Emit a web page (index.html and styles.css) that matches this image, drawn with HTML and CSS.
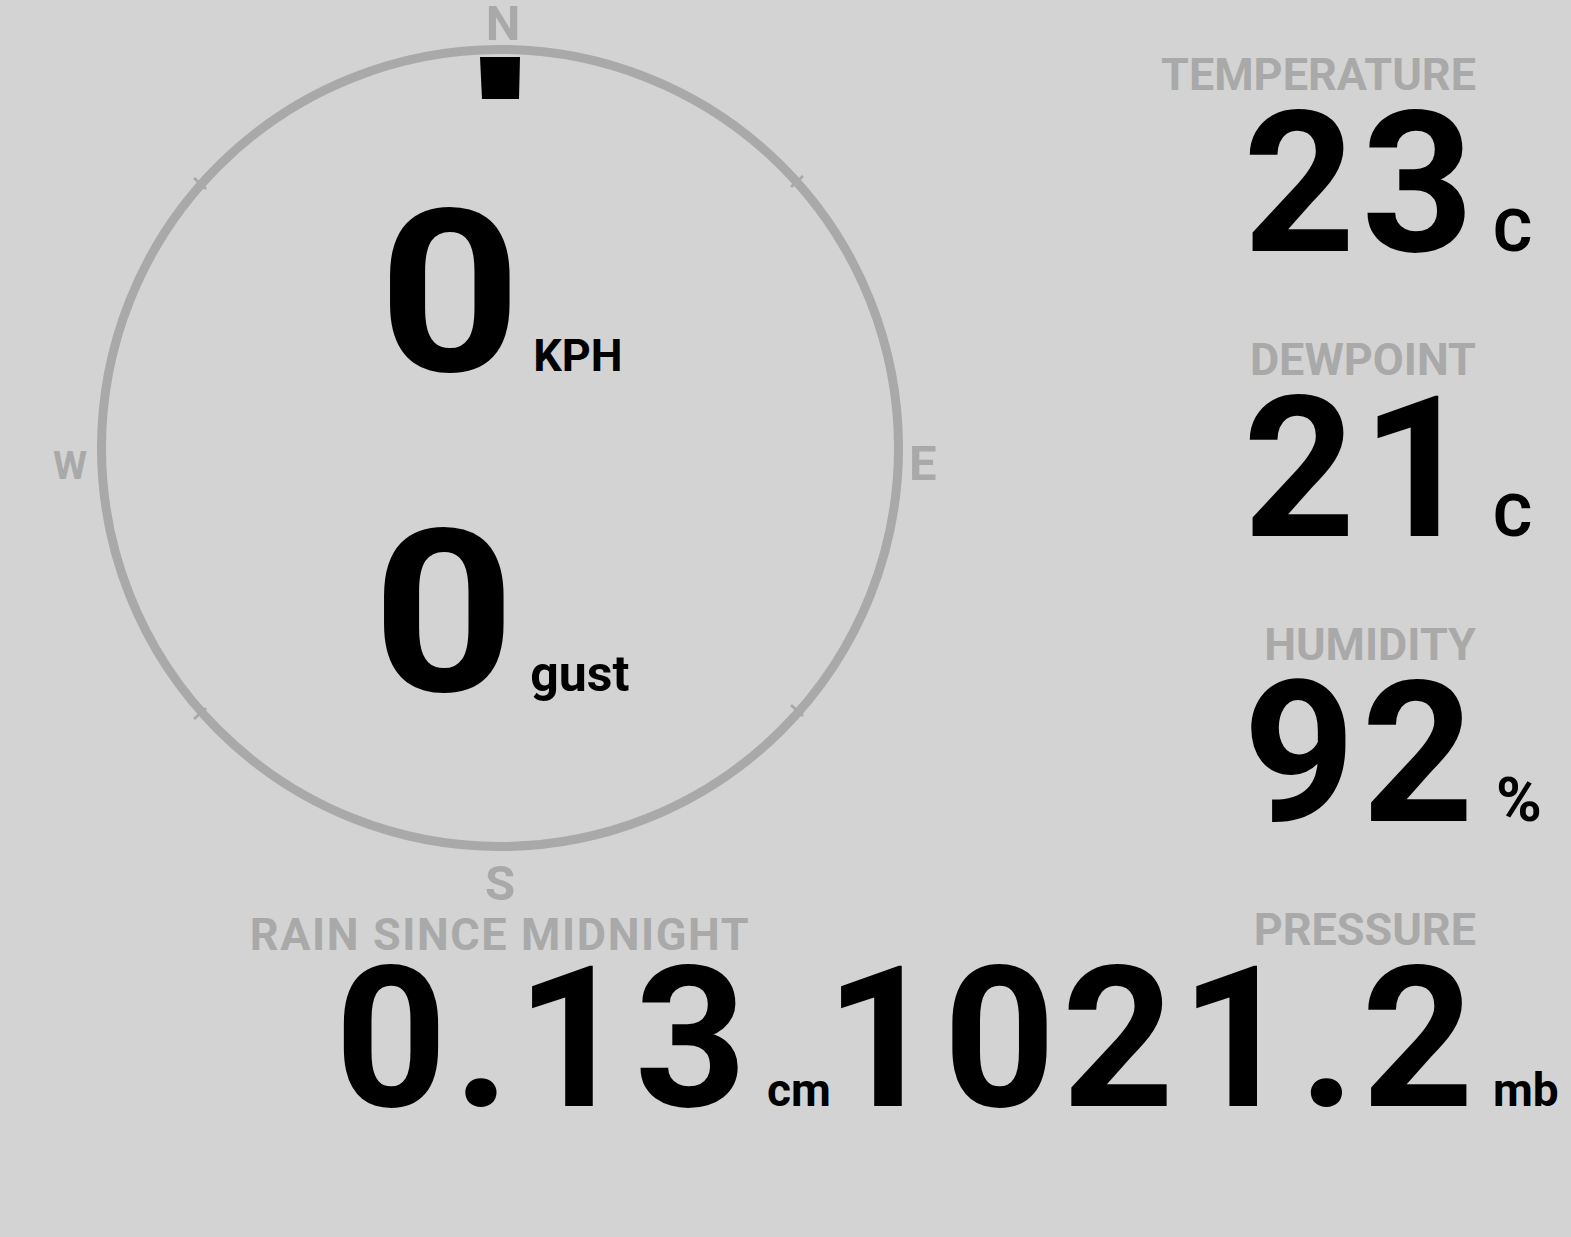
FILE: index.html
```html
<!DOCTYPE html>
<html lang="en">
<head>
    <meta charset="UTF-8">
    <meta name="viewport" content="width=device-width, initial-scale=1.0">
    <title>Weather</title>
    <link rel="stylesheet" href="styles.css">
</head>
<body>

<div class="dashboard">
    <div class="left-col">
        <!-- Kompas angin -->
        <div class="compass">
            <svg class="dial" width="1000" height="912" viewBox="0 0 1000 912">
                <circle cx="500" cy="448" r="398.5" fill="none" stroke="#a9a9a9" stroke-width="9"/>
                <line x1="194" y1="178" x2="206" y2="189" stroke="#a9a9a9" stroke-width="3"/>
                <line x1="791" y1="187" x2="803" y2="176" stroke="#a9a9a9" stroke-width="3"/>
                <line x1="194" y1="719" x2="206" y2="708" stroke="#a9a9a9" stroke-width="3"/>
                <line x1="791" y1="705" x2="803" y2="716" stroke="#a9a9a9" stroke-width="3"/>
                <polygon class="needle" points="480,57 520,57 519,99 482,99"/>
                <text class="dir" x="503" y="40" text-anchor="middle">N</text>
                <text class="dir" x="909" y="480">E</text>
                <text class="dir" x="500" y="900" text-anchor="middle">S</text>
                <text class="dir dir-small" x="70" y="479" text-anchor="middle">W</text>
            </svg>

            <div class="speeds">
                <div class="speed-row">
                    <span class="speed">0</span>
                    <span class="speed-unit">KPH</span>
                </div>
                <div class="speed-row">
                    <span class="speed">0</span>
                    <span class="gust-unit">gust</span>
                </div>
            </div>
        </div>

        <!-- Hujan -->
        <div class="rain">
            <div class="label rain-label">RAIN SINCE MIDNIGHT</div>
            <div class="value-row rain-row">
                <span class="value">0.13</span>
                <span class="unit unit-small">cm</span>
            </div>
        </div>
    </div>

    <div class="readings">
        <div class="reading">
            <div class="label">TEMPERATURE</div>
            <div class="value-row">
                <span class="value">23</span>
                <span class="unit">C</span>
            </div>
        </div>
        <div class="reading">
            <div class="label">DEWPOINT</div>
            <div class="value-row">
                <span class="value">21</span>
                <span class="unit">C</span>
            </div>
        </div>
        <div class="reading">
            <div class="label">HUMIDITY</div>
            <div class="value-row">
                <span class="value">92</span>
                <span class="unit unit-pct">%</span>
            </div>
        </div>
        <div class="reading">
            <div class="label">PRESSURE</div>
            <div class="value-row">
                <span class="value">1021.2</span>
                <span class="unit unit-small">mb</span>
            </div>
        </div>
    </div>
</div>

</body>
</html>
```

FILE: styles.css
```css
body {
    font-family: Roboto, "Liberation Sans", sans-serif;
    font-weight: 700;
    margin: 0;
    padding: 0;
    background-color: #d3d3d3;
    color: #000;
}
.dashboard {
    display: flex;
    width: 1571px;
    height: 1237px;
    overflow: hidden;
}
.left-col {
    width: 1000px;
    flex-shrink: 0;
}
.compass {
    position: relative;
    height: 912px;
}
.dial {
    position: absolute;
    top: 0;
    left: 0;
}
.needle {
    fill: #000;
}
.dir {
    font-family: Roboto, "Liberation Sans", sans-serif;
    font-weight: 700;
    font-size: 49px;
    fill: #a9a9a9;
}
.dir-small {
    font-size: 39px;
}
.speeds {
    position: relative;
    padding-top: 194px;
    display: flex;
    flex-direction: column;
    gap: 120px;
}
.speed-row {
    display: flex;
    justify-content: center;
    align-items: baseline;
    padding-left: 8px;
    height: 200px;
}
.speed {
    font-size: 226px;
    line-height: 200px;
    transform: scaleX(1.1);
}
.speed-unit {
    font-size: 45px;
    margin-left: 18px;
}
.gust-unit {
    font-size: 50px;
    margin-left: 22px;
}
.label {
    font-size: 45px;
    line-height: 45px;
    color: #a9a9a9;
    text-align: right;
    padding-right: 95px;
    white-space: nowrap;
}
.value-row {
    display: flex;
    justify-content: flex-end;
    align-items: baseline;
    margin-top: 12px;
    height: 150px;
}
.value {
    font-size: 196px;
    line-height: 150px;
    letter-spacing: 6px;
    margin-right: -6px;
    white-space: nowrap;
}
.unit {
    width: 97px;
    flex-shrink: 0;
    box-sizing: border-box;
    padding-left: 19px;
    font-size: 60px;
}
.unit-small {
    font-size: 46px;
}
.unit-pct {
    padding-left: 22px;
    font-size: 62px;
}
.readings {
    flex: 1;
    min-width: 0;
    padding-top: 52px;
}
.reading {
    height: 285px;
}
.rain-label {
    text-align: center;
    padding-right: 0;
    letter-spacing: 1.6px;
}
.rain-row {
    margin-top: 7px;
    padding-right: 150px;
}
.rain-row .value {
    margin-right: 0;
}
.rain-row .unit {
    padding-left: 14px;
}
```
